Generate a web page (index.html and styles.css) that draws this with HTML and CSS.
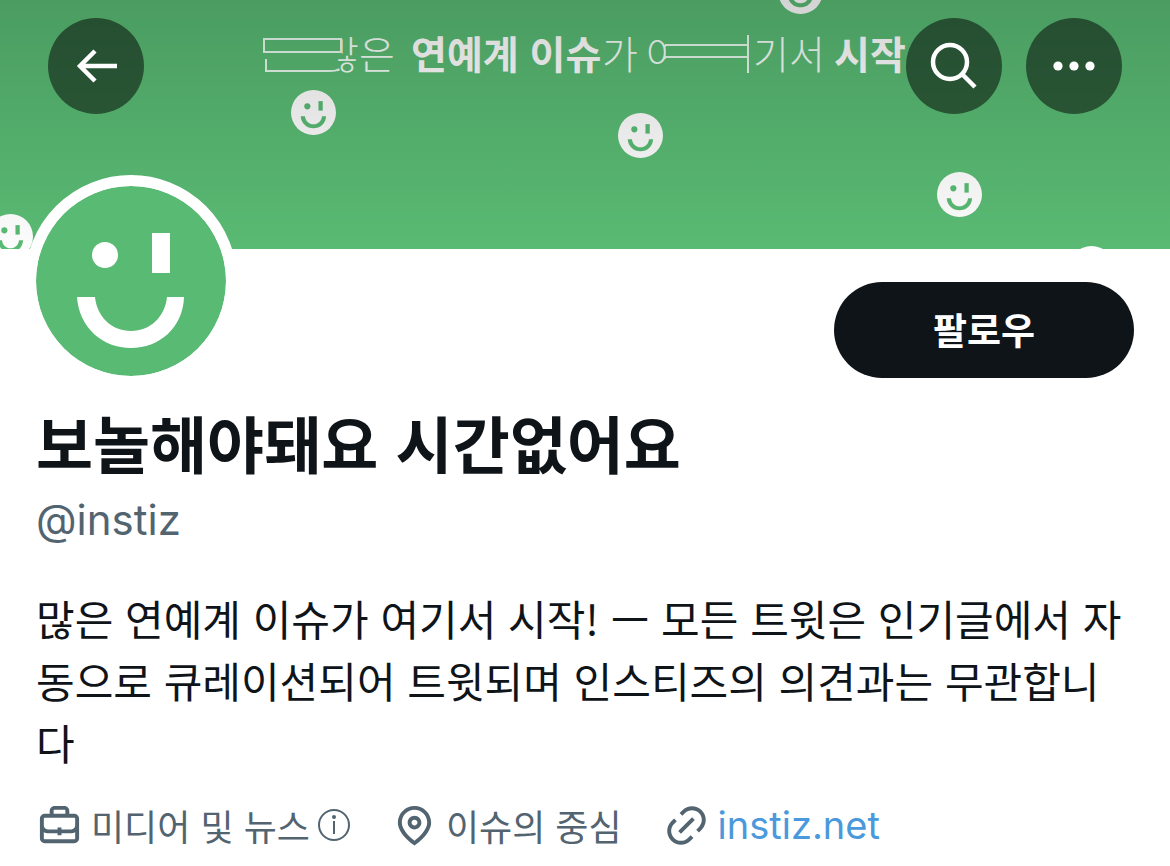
FILE: index.html
```html
<!DOCTYPE html>
<html lang="ko">
<head>
    <meta charset="UTF-8">
    <meta name="viewport" content="width=device-width, initial-scale=1.0">
    <title>보놀해야돼요 시간없어요 (@instiz)</title>
    <link rel="stylesheet" href="styles.css">
</head>
<body>
    <header class="banner">
        <svg class="banner-art" viewBox="0 0 1170 249" preserveAspectRatio="xMidYMid slice">
            <defs>
                <symbol id="face" viewBox="-95 -95 190 190">
                    <circle class="face-bg" r="95"/>
                    <circle class="face-line" cx="-26" cy="-26" r="13"/>
                    <rect class="face-line" x="21" y="-48" width="18" height="40"/>
                    <path class="face-line" d="M-54 16C-52 47-28 67 0 67S52 47 53 16H36C34 36 19 50 0 50S-34 36-36 16Z"/>
                </symbol>
                <clipPath id="clip-many"><rect x="342" y="30" width="22" height="26"/><rect x="337" y="54" width="24" height="24"/></clipPath>
                <clipPath id="clip-yeo"><rect x="640" y="30" width="26" height="48"/></clipPath>
            </defs>

            <g class="faces">
                <use href="#face" x="291" y="90" width="45" height="45"/>
                <use href="#face" x="618" y="113" width="45" height="45"/>
                <use href="#face" x="937" y="172" width="45" height="45"/>
                <use href="#face" x="778" y="-31" width="45" height="45"/>
                <use href="#face" x="-12" y="214" width="45" height="45"/>
                <use href="#face" x="1069" y="246" width="45" height="45"/>
            </g>

            <g class="slogan">
                <text x="323" y="69" clip-path="url(#clip-many)">많</text>
                <text x="359" y="69">은</text>
                <text class="strong" x="411" y="69">연예계 이슈</text>
                <text x="602" y="69">가</text>
                <text x="646" y="69" clip-path="url(#clip-yeo)">여</text>
                <text x="753" y="69">기서</text>
                <text class="strong" x="834" y="69">시작</text>
            </g>
            <!-- 길게 늘어난 획 -->
            <g class="stretch">
                <rect x="264" y="39" width="77" height="13"/>
                <path d="M266 59V71H330Q336 71 339 69"/>
                <path d="M665 45H748M665 57H748M748 35V73"/>
            </g>
        </svg>

        <nav class="toolbar">
            <button class="round-button" type="button" aria-label="뒤로">
                <svg viewBox="0 0 96 96"><path d="M69 48H32M47 33L32 48L47 63"/></svg>
            </button>
            <button class="round-button push" type="button" aria-label="검색">
                <svg viewBox="0 0 96 96"><circle cx="44" cy="44" r="17"/><path d="M56 56L69 69"/></svg>
            </button>
            <button class="round-button" type="button" aria-label="더 보기">
                <svg class="dots" viewBox="0 0 96 96"><circle cx="32" cy="48" r="4.6"/><circle cx="48" cy="48" r="4.6"/><circle cx="64" cy="48" r="4.6"/></svg>
            </button>
        </nav>
    </header>

    <main class="profile">
        <div class="profile-top">
            <svg class="avatar" viewBox="0 0 190 190" role="img" aria-label="프로필 사진"><use href="#face" width="190" height="190"/></svg>
            <button class="follow-button" type="button">팔로우</button>
        </div>

        <h1 class="name">보놀해야돼요 시간없어요</h1>
        <p class="handle">@instiz</p>
        <p class="bio">많은 연예계 이슈가 여기서 시작! ㅡ 모든 트윗은 인기글에서 자동으로 큐레이션되어 트윗되며 인스티즈의 의견과는 무관합니다</p>

        <ul class="meta">
            <li>
                <svg viewBox="0 0 24 24"><path d="M19.5 6H17V4.5C17 3.12 15.88 2 14.5 2h-5C8.12 2 7 3.12 7 4.5V6H4.5C3.12 6 2 7.12 2 8.5v10C2 19.88 3.12 21 4.5 21h15c1.38 0 2.5-1.12 2.5-2.5v-10C22 7.12 20.88 6 19.5 6zM9 4.5c0-.28.23-.5.5-.5h5c.28 0 .5.22.5.5V6H9V4.5zm11 14c0 .28-.22.5-.5.5h-15c-.27 0-.5-.22-.5-.5v-3.04c.59.35 1.27.54 2 .54h5v1h2v-1h5c.73 0 1.41-.19 2-.54v3.04zm0-6.49c0 1.1-.9 1.99-2 1.99h-5v-1h-2v1H6c-1.1 0-2-.9-2-2V8.5c0-.28.23-.5.5-.5h15c.28 0 .5.22.5.5v3.51z"/></svg>
                <span>미디어 및 뉴스</span>
                <svg class="info" viewBox="0 0 32 32"><circle class="ring" cx="16" cy="16" r="15"/><circle cx="16" cy="8" r="2"/><path d="M15 12h2v13h-2z"/></svg>
            </li>
            <li>
                <svg viewBox="0 0 24 24"><path d="M12 7c-1.93 0-3.5 1.57-3.5 3.5S10.07 14 12 14s3.5-1.57 3.5-3.5S13.93 7 12 7zm0 5c-.827 0-1.5-.673-1.5-1.5S11.173 9 12 9s1.5.673 1.5 1.5S12.827 12 12 12zm0-10c-4.687 0-8.5 3.813-8.5 8.5 0 5.967 7.621 11.116 7.945 11.332l.555.37.555-.37c.324-.216 7.945-5.365 7.945-11.332C20.5 5.813 16.687 2 12 2zm0 17.77c-1.665-1.241-6.5-5.196-6.5-9.27C5.5 6.916 8.416 4 12 4s6.5 2.916 6.5 6.5c0 4.073-4.835 8.028-6.5 9.27z"/></svg>
                <span>이슈의 중심</span>
            </li>
            <li>
                <svg viewBox="0 0 24 24"><path d="M18.36 5.64c-1.95-1.96-5.11-1.96-7.07 0L9.88 7.05 8.46 5.64l1.42-1.42c2.73-2.73 7.16-2.73 9.9 0 2.73 2.74 2.73 7.17 0 9.9l-1.42 1.42-1.41-1.42 1.41-1.41c1.96-1.96 1.96-5.12 0-7.07zm-2.12 3.53l-7.07 7.07-1.41-1.41 7.07-7.07 1.41 1.41zm-12.02.71l1.42-1.42 1.41 1.42-1.41 1.41c-1.96 1.96-1.96 5.12 0 7.07 1.95 1.96 5.11 1.96 7.07 0l1.41-1.41 1.42 1.41-1.42 1.42c-2.73 2.73-7.16 2.73-9.9 0-2.73-2.74-2.73-7.17 0-9.9z"/></svg>
                <a href="https://instiz.net">instiz.net</a>
            </li>
        </ul>
    </main>
</body>
</html>
```
FILE: styles.css
```css
:root {
    --green: #59ba73;
    --text: #0f1419;
    --muted: #536471;
    --link: #4a99dc;
}

* {
    box-sizing: border-box;
}

body {
    margin: 0;
    background: #fff;
    color: var(--text);
    font-family: "Noto Sans CJK KR", sans-serif;
}

button {
    border: none;
    padding: 0;
    cursor: pointer;
    font-family: inherit;
}

/* 상단 배너 */
.banner {
    position: relative;
    height: 249px;
    background: var(--green);
}

.banner::after {
    content: "";
    position: absolute;
    inset: 0;
    background: linear-gradient(rgba(0, 0, 0, 0.16), rgba(0, 0, 0, 0));
}

.banner-art {
    position: absolute;
    width: 100%;
    height: 100%;
}

.face-bg {
    fill: var(--face-bg);
}

.face-line {
    fill: var(--face-line);
}

.faces {
    --face-bg: #fdfcfd;
    --face-line: var(--green);
}

.slogan {
    fill: #f4fff7;
    font-family: "Noto Sans CJK KR", sans-serif;
    font-size: 39px;
    font-weight: 300;
}

.slogan .strong {
    fill: #fff;
    font-weight: 700;
}

.stretch {
    fill: none;
    stroke: #e6fbec;
    stroke-width: 2;
}

.toolbar {
    position: relative;
    z-index: 1;
    display: flex;
    gap: 24px;
    padding: 18px 48px;
}

.round-button {
    width: 96px;
    height: 96px;
    border-radius: 50%;
    background: rgba(0, 0, 0, 0.5);
}

.round-button svg {
    display: block;
    fill: none;
    stroke: #fff;
    stroke-width: 4.5;
}

.round-button .dots {
    fill: #fff;
    stroke: none;
}

.push {
    margin-left: auto;
}

/* 프로필 */
.profile {
    padding: 0 36px;
}

.profile-top {
    display: flex;
    justify-content: space-between;
    align-items: flex-end;
    margin-top: -74px;
}

.avatar {
    position: relative;
    z-index: 1;
    --face-bg: var(--green);
    --face-line: #fff;
    width: 212px;
    height: 212px;
    margin: 0 0 -9px -11px;
    border: 11px solid #fff;
    border-radius: 50%;
    background: #fff;
}

.follow-button {
    width: 300px;
    height: 96px;
    padding-bottom: 2px;
    border-radius: 48px;
    background: var(--text);
    color: #fff;
    font-size: 37px;
    font-weight: 700;
}

.name {
    margin: 28px 0 0;
    font-size: 62px;
    line-height: 72px;
    font-weight: 700;
}

.handle {
    margin: 14px 0 0;
    color: var(--muted);
    font-family: Inter, sans-serif;
    font-size: 42px;
    line-height: 56px;
}

.bio {
    margin: 39px 0 0;
    font-size: 42px;
    line-height: 62px;
}

.meta {
    display: flex;
    gap: 41px;
    margin: 28px 0 0;
    padding: 0;
    list-style: none;
    color: var(--muted);
    font-size: 36px;
    line-height: 48px;
}

.meta li {
    display: flex;
    align-items: center;
    gap: 8px;
}

.meta svg {
    width: 47px;
    height: 47px;
    fill: currentColor;
}

.meta .info {
    width: 32px;
    height: 32px;
}

.info .ring {
    fill: none;
    stroke: currentColor;
    stroke-width: 2;
}

.meta a {
    color: var(--link);
    font-family: Inter, sans-serif;
    font-size: 38px;
    text-decoration: none;
}
```
